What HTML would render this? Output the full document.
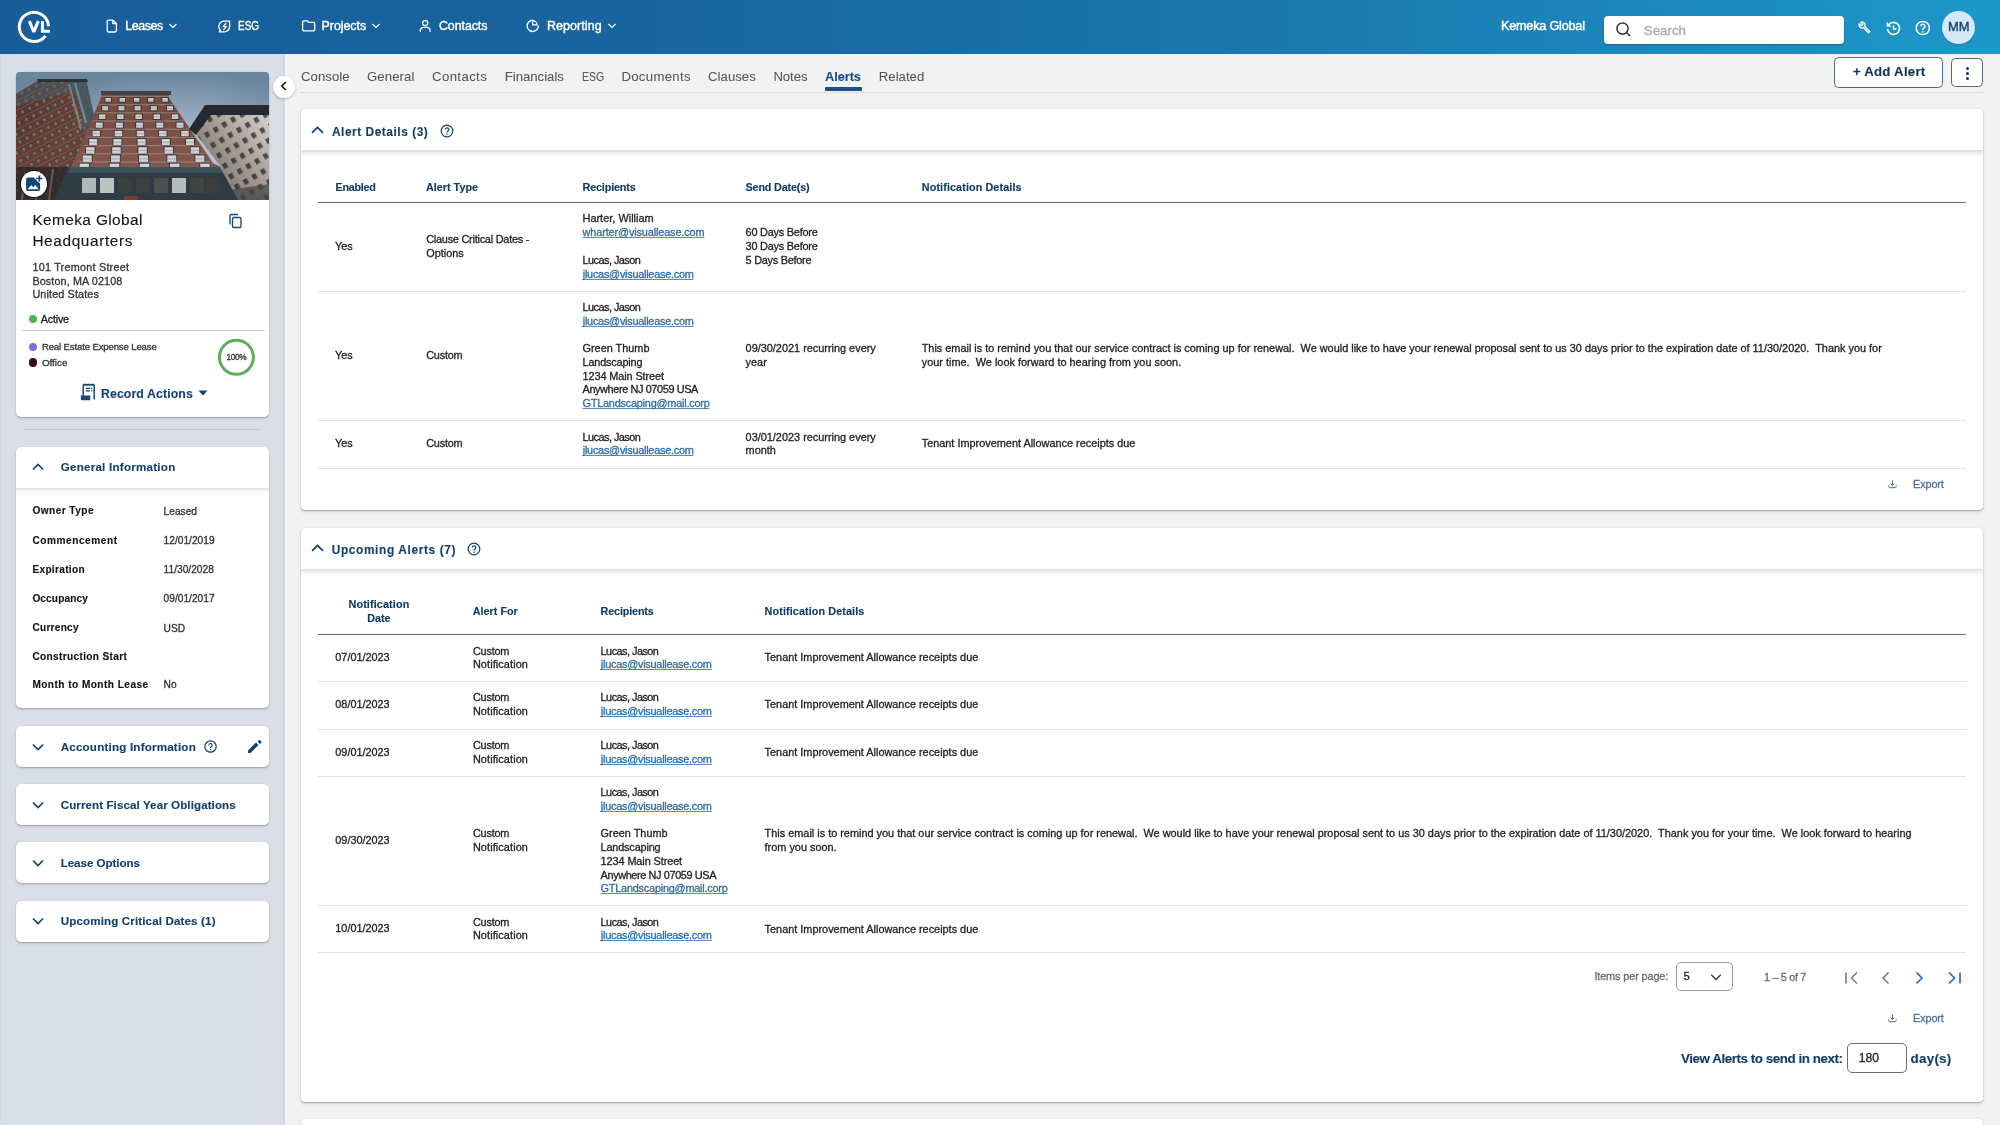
<!DOCTYPE html>
<html><head><meta charset="utf-8"><title>Alerts</title>
<style>
html,body{margin:0;padding:0;}
body{width:2000px;height:1125px;overflow:hidden;position:relative;background:#f2f2f2;font-family:"Liberation Sans",sans-serif;}
.a{position:absolute;}
.t{position:absolute;white-space:pre;-webkit-text-stroke:0.3px currentColor;}
.u{text-decoration:underline;text-underline-offset:1.2px;text-decoration-thickness:1px;text-decoration-skip-ink:none;text-decoration-color:#5d8cbc;}
</style></head><body><div id="root" style="position:absolute;left:0;top:0;width:2000px;height:1125px;overflow:hidden;will-change:transform;">
<div class="a" style="left:0px;top:0px;width:2000px;height:54px;background:linear-gradient(90deg,#185d9a 0%,#1764a0 30%,#1a6fa8 50%,#1b7db4 70%,#1d97c9 100%);"></div>
<svg class="a" style="left:14px;top:7px;" width="40" height="40" viewBox="0 0 40 40"><path d="M34.5 19.2 A14.6 14.6 0 1 0 31.5 28.8" fill="none" stroke="#fff" stroke-width="3"/>
<path d="M15.3 14.2L19.8 25 24.3 14.2" fill="none" stroke="#fff" stroke-width="3.1" stroke-linejoin="bevel"/>
<path d="M28.4 14V24.2H36" fill="none" stroke="#fff" stroke-width="3"/></svg>
<svg class="a" style="left:105px;top:19px;" width="14" height="14" viewBox="0 0 14 14"><path d="M2.2 2.6a1.5 1.5 0 0 1 1.5-1.5h4.3l3.4 3.4v7a1.5 1.5 0 0 1-1.5 1.5H3.7a1.5 1.5 0 0 1-1.5-1.5z M7.8 1.2v3.4h3.4" fill="none" stroke="#fff" stroke-width="1.3" stroke-linejoin="round"/></svg>
<div class="t " style="left:125.30px;top:18.96px;font-size:12.4px;line-height:14.88px;color:#ffffff;-webkit-text-stroke:0.38px #ffffff;letter-spacing:-0.398px;">Leases</div>
<svg class="a" style="left:168px;top:22px;" width="10" height="8" viewBox="0 0 10 8"><path d="M1.5 2l3.5 3.5 3.5-3.5" fill="none" stroke="#fff" stroke-width="1.2"/></svg>
<svg class="a" style="left:217px;top:19px;" width="15" height="15" viewBox="0 0 15 15"><path d="M7.2 2.1H12.6V7.6A5.2 5.2 0 0 1 7.4 12.8H2.3L3.6 11.3A5.3 5.3 0 0 1 7.2 2.1Z" fill="none" stroke="#fff" stroke-width="1.35" stroke-linejoin="round"/><path d="M8.9 4.5L6 7.7H9.4L6.6 10.7" fill="none" stroke="#fff" stroke-width="1.2" stroke-linejoin="round" stroke-linecap="round"/></svg>
<div class="t " style="left:238.40px;top:18.96px;font-size:12.4px;line-height:14.88px;color:#ffffff;-webkit-text-stroke:0.38px #ffffff;transform:scaleX(0.8026);transform-origin:0.00px 0;">ESG</div>
<svg class="a" style="left:300px;top:18px;" width="16" height="15" viewBox="0 0 16 15"><path d="M2.6 4.1a1.3 1.3 0 0 1 1.3-1.3h3.2l1.5 1.5h4.8a1.3 1.3 0 0 1 1.3 1.3v5.9a1.3 1.3 0 0 1-1.3 1.3H3.9a1.3 1.3 0 0 1-1.3-1.3z" fill="none" stroke="#fff" stroke-width="1.3" stroke-linejoin="round"/></svg>
<div class="t " style="left:321.60px;top:18.96px;font-size:12.4px;line-height:14.88px;color:#ffffff;-webkit-text-stroke:0.38px #ffffff;letter-spacing:-0.038px;">Projects</div>
<svg class="a" style="left:371px;top:22px;" width="10" height="8" viewBox="0 0 10 8"><path d="M1.5 2l3.5 3.5 3.5-3.5" fill="none" stroke="#fff" stroke-width="1.2"/></svg>
<svg class="a" style="left:418px;top:19px;" width="14" height="14" viewBox="0 0 14 14"><circle cx="7.2" cy="4.1" r="2.6" fill="none" stroke="#fff" stroke-width="1.3"/><path d="M2.3 12.3v-.7a3.6 3.2 0 0 1 3.6-3.2h2.6a3.6 3.2 0 0 1 3.6 3.2v.7" fill="none" stroke="#fff" stroke-width="1.3" stroke-linecap="round"/></svg>
<div class="t " style="left:439.00px;top:18.96px;font-size:12.4px;line-height:14.88px;color:#ffffff;-webkit-text-stroke:0.38px #ffffff;letter-spacing:-0.074px;">Contacts</div>
<svg class="a" style="left:525px;top:18px;" width="15" height="15" viewBox="0 0 15 15"><path d="M7.7 2.3A5.6 5.6 0 1 0 13.3 7.9" fill="none" stroke="#fff" stroke-width="1.4" stroke-linecap="round"/><path d="M7.7 2.6v4.3h4.3a4.3 4.3 0 0 0-4.3-4.3z" fill="none" stroke="#fff" stroke-width="1.2" stroke-linejoin="round"/></svg>
<div class="t " style="left:547.00px;top:18.96px;font-size:12.4px;line-height:14.88px;color:#ffffff;-webkit-text-stroke:0.38px #ffffff;letter-spacing:0.106px;">Reporting</div>
<svg class="a" style="left:607px;top:22px;" width="10" height="8" viewBox="0 0 10 8"><path d="M1.5 2l3.5 3.5 3.5-3.5" fill="none" stroke="#fff" stroke-width="1.2"/></svg>
<div class="t " style="left:1501.00px;top:19.17px;font-size:12.6px;line-height:15.12px;color:#ffffff;-webkit-text-stroke:0.4px #ffffff;letter-spacing:-0.177px;">Kemeka Global</div>
<div class="a" style="left:1604px;top:16px;width:240px;height:28px;background:#fff;border-radius:4px;box-shadow:0 1px 2px rgba(0,0,0,.25);"></div>
<svg class="a" style="left:1615px;top:21px;" width="18" height="17" viewBox="0 0 18 17"><circle cx="7.5" cy="7.5" r="5.6" fill="none" stroke="#333" stroke-width="1.5"/><path d="M11.5 11.5l3.5 3.5" stroke="#333" stroke-width="1.6"/></svg>
<div class="t " style="left:1643.75px;top:23.01px;font-size:13.3px;line-height:15.96px;color:#a9a9a9;letter-spacing:0.018px;">Search</div>
<svg class="a" style="left:1858.3px;top:21.3px;" width="13" height="13" viewBox="0 0 13 13"><g transform="scale(0.54)"><path d="M22.61 18.99l-9.08-9.08c.93-2.34.45-5.1-1.44-7C9.79.61 6.210.4 3.66 2.26L7.5 6.11 6.08 7.52 2.25 3.690C.39 6.23.6 9.82 2.9 12.11c1.86 1.86 4.57 2.35 6.89 1.48l9.11 9.11c.39.39 1.02.39 1.41 0l2.3-2.3c.4-.38.4-1.01 0-1.41zm-3 1.6l-9.46-9.46c-.61.45-1.290.72-2 .82-1.36.2-2.79-.21-3.83-1.25C3.37 9.76 2.930 8.5 3 7.26l3.090 3.09 4.24-4.24-3.09-3.09c1.24-.07 2.49.37 3.44 1.31 1.080 1.08 1.49 2.57 1.24 3.96-.12.71-.42 1.37-.88 1.96l9.45 9.45-.88.89z" fill="#fff" stroke="#fff" stroke-width=".6"/></g></svg>
<svg class="a" style="left:1886px;top:21px;" width="15" height="15" viewBox="0 0 15 15"><path d="M2.2 4.5A6 6 0 1 1 1.5 8" fill="none" stroke="#fff" stroke-width="1.6"/><path d="M1.3 1.5v3.5h3.5" fill="none" stroke="#fff" stroke-width="1.5"/><path d="M7.5 4.5v3.5h3" fill="none" stroke="#fff" stroke-width="1.5"/></svg>
<svg class="a" style="left:1915px;top:20px;" width="16" height="16" viewBox="0 0 16 16"><circle cx="7.8" cy="8" r="6.6" fill="none" stroke="#fff" stroke-width="1.5"/><path d="M5.7 6.3a2.1 2.1 0 1 1 2.9 1.9c-.6.3-.8.7-.8 1.3v.4" fill="none" stroke="#fff" stroke-width="1.4"/><circle cx="7.8" cy="11.8" r=".9" fill="#fff"/></svg>
<div class="a" style="left:1942px;top:10.5px;width:33px;height:33px;background:#d3e8f9;border-radius:50%;box-shadow:0 1px 2px rgba(0,0,0,.15);"></div>
<div class="t " style="left:1947.50px;top:18.88px;font-size:12.8px;line-height:15.36px;color:#17406c;-webkit-text-stroke:0.38px #17406c;transform:scaleX(1.0088);transform-origin:0.00px 0;">MM</div>
<div class="a" style="left:0px;top:54px;width:283px;height:1071px;background:#dadee7;"></div>
<div class="a" style="left:283px;top:54px;width:2px;height:1071px;background:#d4d8e2;"></div>
<div class="a" style="left:0px;top:54px;width:1.2px;height:1071px;background:#cfd4de;"></div>
<div class="a" style="left:285px;top:54px;width:1px;height:1071px;background:#f4f4f7;"></div>
<div class="a" style="left:16px;top:72px;width:253px;height:345px;background:#fff;border-radius:5px;box-shadow:0 0 1px rgba(20,30,60,.2),0 1px 1px rgba(20,30,60,.18),0 2px 3px rgba(20,30,60,.1);"></div>
<svg class="a" style="left:16px;top:72px;filter:saturate(.72);" width="253" height="128" viewBox="0 0 253 128"><defs>
<radialGradient id="sky" cx="0.62" cy="0.75" r="0.75"><stop offset="0" stop-color="#c0d6ea"/><stop offset="0.5" stop-color="#92b0cc"/><stop offset="1" stop-color="#6286a8"/></radialGradient>
<linearGradient id="lb" x1="0" y1="0" x2="1" y2="1"><stop offset="0" stop-color="#5a2e28"/><stop offset="0.6" stop-color="#76402f"/><stop offset="1" stop-color="#4a2a26"/></linearGradient>
<linearGradient id="cb" x1="0" y1="0" x2="0" y2="1"><stop offset="0" stop-color="#7e4638"/><stop offset="1" stop-color="#915446"/></linearGradient>
<linearGradient id="rb" x1="0" y1="1" x2="1" y2="0"><stop offset="0" stop-color="#6e645a"/><stop offset="0.55" stop-color="#a69a8e"/><stop offset="1" stop-color="#d6d0ca"/></linearGradient>
<pattern id="lw" width="8" height="8.5" patternUnits="userSpaceOnUse" patternTransform="rotate(-27)"><rect width="8" height="8.5" fill="none"/><rect x="1.8" y="2.2" width="4" height="4.6" fill="#2e2222" opacity=".55"/><rect x="2.4" y="2.8" width="2.8" height="3.4" fill="#8fa5a5" opacity=".6"/><rect x="0" y="0" width="8" height="1" fill="#9a6050" opacity=".6"/></pattern>
<pattern id="rw" width="10" height="12" patternUnits="userSpaceOnUse" patternTransform="rotate(-30)"><rect x="2" y="3" width="4.5" height="5.5" fill="#26282a" opacity=".75"/></pattern>
<clipPath id="pc"><path d="M0 128V4a4 4 0 0 1 4-4h245a4 4 0 0 1 4 4v124z"/></clipPath></defs>
<g clip-path="url(#pc)">
<rect width="253" height="128" fill="url(#sky)"/>
<path d="M0 22 L23 8 L70 8 L79 48 L64 95 L50 128 L0 128z" fill="url(#lb)"/>
<path d="M0 22 L23 8 L70 8 L79 48 L64 95 L50 128 L0 128z" fill="url(#lw)"/>
<path d="M50 8 L70 8 L79 48 L71 64 L60 24z" fill="#3e5a66" opacity=".9"/><path d="M23 8 L52 8 L56 20 L0 34 L0 22z" fill="#45606a" opacity=".55"/>
<path d="M52 12 L54 12 L66 56 L64 58z M58 11 L60 11 L71 50 L69 52z" fill="#8fa6b0" opacity=".6"/>
<path d="M21 7 L71 7 L72 10 L22 10z" fill="#2a3438"/>
<path d="M87 21 L153 21 L153 26 L197 91 L205 95 L55 95 L62 80z" fill="url(#cb)"/>
<path d="M85 19 L155 19 L155 23 L85 23z" fill="#3e4444"/>
<rect x="86.2" y="23.8" width="68.9" height="1.3" fill="#b59888" opacity=".55"/><rect x="88.5" y="25.1" width="7.3" height="5.5" fill="#2e2624" opacity=".75"/><rect x="89.4" y="26.0" width="5.5" height="3.7" fill="#c9d5dd"/><rect x="89.4" y="27.7" width="5.5" height="0.8" fill="#6f7e86" opacity=".6"/><rect x="102.7" y="25.1" width="7.3" height="5.5" fill="#2e2624" opacity=".75"/><rect x="103.6" y="26.0" width="5.5" height="3.7" fill="#c9d5dd"/><rect x="103.6" y="27.7" width="5.5" height="0.8" fill="#6f7e86" opacity=".6"/><rect x="117.0" y="25.1" width="7.3" height="5.5" fill="#2e2624" opacity=".75"/><rect x="117.9" y="26.0" width="5.5" height="3.7" fill="#c9d5dd"/><rect x="117.9" y="27.7" width="5.5" height="0.8" fill="#6f7e86" opacity=".6"/><rect x="131.2" y="25.1" width="7.3" height="5.5" fill="#2e2624" opacity=".75"/><rect x="132.1" y="26.0" width="5.5" height="3.7" fill="#c9d5dd"/><rect x="132.1" y="27.7" width="5.5" height="0.8" fill="#6f7e86" opacity=".6"/><rect x="145.4" y="25.1" width="7.3" height="5.5" fill="#2e2624" opacity=".75"/><rect x="146.3" y="26.0" width="5.5" height="3.7" fill="#c9d5dd"/><rect x="146.3" y="27.7" width="5.5" height="0.8" fill="#6f7e86" opacity=".6"/><rect x="83.2" y="32.0" width="76.8" height="1.3" fill="#b59888" opacity=".55"/><rect x="85.3" y="33.3" width="7.8" height="5.9" fill="#2e2624" opacity=".75"/><rect x="86.2" y="34.2" width="6.0" height="4.1" fill="#c9d5dd"/><rect x="86.2" y="36.1" width="6.0" height="0.8" fill="#6f7e86" opacity=".6"/><rect x="101.5" y="33.3" width="7.8" height="5.9" fill="#2e2624" opacity=".75"/><rect x="102.4" y="34.2" width="6.0" height="4.1" fill="#c9d5dd"/><rect x="102.4" y="36.1" width="6.0" height="0.8" fill="#6f7e86" opacity=".6"/><rect x="117.7" y="33.3" width="7.8" height="5.9" fill="#2e2624" opacity=".75"/><rect x="118.6" y="34.2" width="6.0" height="4.1" fill="#c9d5dd"/><rect x="118.6" y="36.1" width="6.0" height="0.8" fill="#6f7e86" opacity=".6"/><rect x="133.9" y="33.3" width="7.8" height="5.9" fill="#2e2624" opacity=".75"/><rect x="134.8" y="34.2" width="6.0" height="4.1" fill="#c9d5dd"/><rect x="134.8" y="36.1" width="6.0" height="0.8" fill="#6f7e86" opacity=".6"/><rect x="150.1" y="33.3" width="7.8" height="5.9" fill="#2e2624" opacity=".75"/><rect x="151.0" y="34.2" width="6.0" height="4.1" fill="#c9d5dd"/><rect x="151.0" y="36.1" width="6.0" height="0.8" fill="#6f7e86" opacity=".6"/><rect x="80.2" y="40.2" width="84.8" height="1.3" fill="#b59888" opacity=".55"/><rect x="82.0" y="41.5" width="8.3" height="6.4" fill="#2e2624" opacity=".75"/><rect x="82.9" y="42.4" width="6.5" height="4.6" fill="#c9d5dd"/><rect x="82.9" y="44.5" width="6.5" height="0.8" fill="#6f7e86" opacity=".6"/><rect x="100.2" y="41.5" width="8.3" height="6.4" fill="#2e2624" opacity=".75"/><rect x="101.1" y="42.4" width="6.5" height="4.6" fill="#c9d5dd"/><rect x="101.1" y="44.5" width="6.5" height="0.8" fill="#6f7e86" opacity=".6"/><rect x="118.5" y="41.5" width="8.3" height="6.4" fill="#2e2624" opacity=".75"/><rect x="119.4" y="42.4" width="6.5" height="4.6" fill="#c9d5dd"/><rect x="119.4" y="44.5" width="6.5" height="0.8" fill="#6f7e86" opacity=".6"/><rect x="136.7" y="41.5" width="8.3" height="6.4" fill="#2e2624" opacity=".75"/><rect x="137.6" y="42.4" width="6.5" height="4.6" fill="#c9d5dd"/><rect x="137.6" y="44.5" width="6.5" height="0.8" fill="#6f7e86" opacity=".6"/><rect x="154.9" y="41.5" width="8.3" height="6.4" fill="#2e2624" opacity=".75"/><rect x="155.8" y="42.4" width="6.5" height="4.6" fill="#c9d5dd"/><rect x="155.8" y="44.5" width="6.5" height="0.8" fill="#6f7e86" opacity=".6"/><rect x="77.2" y="48.4" width="92.8" height="1.3" fill="#b59888" opacity=".55"/><rect x="78.8" y="49.7" width="8.8" height="6.9" fill="#2e2624" opacity=".75"/><rect x="79.7" y="50.6" width="7.0" height="5.1" fill="#c9d5dd"/><rect x="79.7" y="52.9" width="7.0" height="0.8" fill="#6f7e86" opacity=".6"/><rect x="99.0" y="49.7" width="8.8" height="6.9" fill="#2e2624" opacity=".75"/><rect x="99.9" y="50.6" width="7.0" height="5.1" fill="#c9d5dd"/><rect x="99.9" y="52.9" width="7.0" height="0.8" fill="#6f7e86" opacity=".6"/><rect x="119.2" y="49.7" width="8.8" height="6.9" fill="#2e2624" opacity=".75"/><rect x="120.1" y="50.6" width="7.0" height="5.1" fill="#c9d5dd"/><rect x="120.1" y="52.9" width="7.0" height="0.8" fill="#6f7e86" opacity=".6"/><rect x="139.4" y="49.7" width="8.8" height="6.9" fill="#2e2624" opacity=".75"/><rect x="140.3" y="50.6" width="7.0" height="5.1" fill="#c9d5dd"/><rect x="140.3" y="52.9" width="7.0" height="0.8" fill="#6f7e86" opacity=".6"/><rect x="159.6" y="49.7" width="8.8" height="6.9" fill="#2e2624" opacity=".75"/><rect x="160.5" y="50.6" width="7.0" height="5.1" fill="#c9d5dd"/><rect x="160.5" y="52.9" width="7.0" height="0.8" fill="#6f7e86" opacity=".6"/><rect x="74.2" y="56.6" width="100.8" height="1.3" fill="#b59888" opacity=".55"/><rect x="75.6" y="57.9" width="9.3" height="7.3" fill="#2e2624" opacity=".75"/><rect x="76.5" y="58.8" width="7.5" height="5.5" fill="#c9d5dd"/><rect x="76.5" y="61.3" width="7.5" height="0.8" fill="#6f7e86" opacity=".6"/><rect x="97.8" y="57.9" width="9.3" height="7.3" fill="#2e2624" opacity=".75"/><rect x="98.7" y="58.8" width="7.5" height="5.5" fill="#c9d5dd"/><rect x="98.7" y="61.3" width="7.5" height="0.8" fill="#6f7e86" opacity=".6"/><rect x="119.9" y="57.9" width="9.3" height="7.3" fill="#2e2624" opacity=".75"/><rect x="120.8" y="58.8" width="7.5" height="5.5" fill="#c9d5dd"/><rect x="120.8" y="61.3" width="7.5" height="0.8" fill="#6f7e86" opacity=".6"/><rect x="142.1" y="57.9" width="9.3" height="7.3" fill="#2e2624" opacity=".75"/><rect x="143.0" y="58.8" width="7.5" height="5.5" fill="#c9d5dd"/><rect x="143.0" y="61.3" width="7.5" height="0.8" fill="#6f7e86" opacity=".6"/><rect x="164.3" y="57.9" width="9.3" height="7.3" fill="#2e2624" opacity=".75"/><rect x="165.2" y="58.8" width="7.5" height="5.5" fill="#c9d5dd"/><rect x="165.2" y="61.3" width="7.5" height="0.8" fill="#6f7e86" opacity=".6"/><rect x="71.2" y="64.8" width="108.8" height="1.3" fill="#b59888" opacity=".55"/><rect x="72.3" y="66.1" width="9.8" height="7.8" fill="#2e2624" opacity=".75"/><rect x="73.2" y="67.0" width="8.0" height="6.0" fill="#c9d5dd"/><rect x="73.2" y="69.7" width="8.0" height="0.8" fill="#6f7e86" opacity=".6"/><rect x="96.5" y="66.1" width="9.8" height="7.8" fill="#2e2624" opacity=".75"/><rect x="97.4" y="67.0" width="8.0" height="6.0" fill="#c9d5dd"/><rect x="97.4" y="69.7" width="8.0" height="0.8" fill="#6f7e86" opacity=".6"/><rect x="120.7" y="66.1" width="9.8" height="7.8" fill="#2e2624" opacity=".75"/><rect x="121.6" y="67.0" width="8.0" height="6.0" fill="#c9d5dd"/><rect x="121.6" y="69.7" width="8.0" height="0.8" fill="#6f7e86" opacity=".6"/><rect x="144.9" y="66.1" width="9.8" height="7.8" fill="#2e2624" opacity=".75"/><rect x="145.8" y="67.0" width="8.0" height="6.0" fill="#c9d5dd"/><rect x="145.8" y="69.7" width="8.0" height="0.8" fill="#6f7e86" opacity=".6"/><rect x="169.1" y="66.1" width="9.8" height="7.8" fill="#2e2624" opacity=".75"/><rect x="170.0" y="67.0" width="8.0" height="6.0" fill="#c9d5dd"/><rect x="170.0" y="69.7" width="8.0" height="0.8" fill="#6f7e86" opacity=".6"/><rect x="68.2" y="73.0" width="116.7" height="1.3" fill="#b59888" opacity=".55"/><rect x="69.1" y="74.3" width="10.3" height="8.3" fill="#2e2624" opacity=".75"/><rect x="70.0" y="75.2" width="8.5" height="6.5" fill="#c9d5dd"/><rect x="70.0" y="78.1" width="8.5" height="0.8" fill="#6f7e86" opacity=".6"/><rect x="95.3" y="74.3" width="10.3" height="8.3" fill="#2e2624" opacity=".75"/><rect x="96.2" y="75.2" width="8.5" height="6.5" fill="#c9d5dd"/><rect x="96.2" y="78.1" width="8.5" height="0.8" fill="#6f7e86" opacity=".6"/><rect x="121.4" y="74.3" width="10.3" height="8.3" fill="#2e2624" opacity=".75"/><rect x="122.3" y="75.2" width="8.5" height="6.5" fill="#c9d5dd"/><rect x="122.3" y="78.1" width="8.5" height="0.8" fill="#6f7e86" opacity=".6"/><rect x="147.6" y="74.3" width="10.3" height="8.3" fill="#2e2624" opacity=".75"/><rect x="148.5" y="75.2" width="8.5" height="6.5" fill="#c9d5dd"/><rect x="148.5" y="78.1" width="8.5" height="0.8" fill="#6f7e86" opacity=".6"/><rect x="173.8" y="74.3" width="10.3" height="8.3" fill="#2e2624" opacity=".75"/><rect x="174.7" y="75.2" width="8.5" height="6.5" fill="#c9d5dd"/><rect x="174.7" y="78.1" width="8.5" height="0.8" fill="#6f7e86" opacity=".6"/><rect x="65.2" y="81.2" width="124.7" height="1.3" fill="#b59888" opacity=".55"/><rect x="65.8" y="82.5" width="10.8" height="8.7" fill="#2e2624" opacity=".75"/><rect x="66.7" y="83.4" width="9.0" height="6.9" fill="#c9d5dd"/><rect x="66.7" y="86.5" width="9.0" height="0.8" fill="#6f7e86" opacity=".6"/><rect x="94.0" y="82.5" width="10.8" height="8.7" fill="#2e2624" opacity=".75"/><rect x="94.9" y="83.4" width="9.0" height="6.9" fill="#c9d5dd"/><rect x="94.9" y="86.5" width="9.0" height="0.8" fill="#6f7e86" opacity=".6"/><rect x="122.2" y="82.5" width="10.8" height="8.7" fill="#2e2624" opacity=".75"/><rect x="123.1" y="83.4" width="9.0" height="6.9" fill="#c9d5dd"/><rect x="123.1" y="86.5" width="9.0" height="0.8" fill="#6f7e86" opacity=".6"/><rect x="150.4" y="82.5" width="10.8" height="8.7" fill="#2e2624" opacity=".75"/><rect x="151.3" y="83.4" width="9.0" height="6.9" fill="#c9d5dd"/><rect x="151.3" y="86.5" width="9.0" height="0.8" fill="#6f7e86" opacity=".6"/><rect x="178.5" y="82.5" width="10.8" height="8.7" fill="#2e2624" opacity=".75"/><rect x="179.4" y="83.4" width="9.0" height="6.9" fill="#c9d5dd"/><rect x="179.4" y="86.5" width="9.0" height="0.8" fill="#6f7e86" opacity=".6"/><rect x="62.2" y="89.4" width="132.7" height="1.3" fill="#b59888" opacity=".55"/><rect x="62.6" y="90.7" width="11.3" height="9.2" fill="#2e2624" opacity=".75"/><rect x="63.5" y="91.6" width="9.5" height="7.4" fill="#c9d5dd"/><rect x="63.5" y="94.9" width="9.5" height="0.8" fill="#6f7e86" opacity=".6"/><rect x="92.8" y="90.7" width="11.3" height="9.2" fill="#2e2624" opacity=".75"/><rect x="93.7" y="91.6" width="9.5" height="7.4" fill="#c9d5dd"/><rect x="93.7" y="94.9" width="9.5" height="0.8" fill="#6f7e86" opacity=".6"/><rect x="122.9" y="90.7" width="11.3" height="9.2" fill="#2e2624" opacity=".75"/><rect x="123.8" y="91.6" width="9.5" height="7.4" fill="#c9d5dd"/><rect x="123.8" y="94.9" width="9.5" height="0.8" fill="#6f7e86" opacity=".6"/><rect x="153.1" y="90.7" width="11.3" height="9.2" fill="#2e2624" opacity=".75"/><rect x="154.0" y="91.6" width="9.5" height="7.4" fill="#c9d5dd"/><rect x="154.0" y="94.9" width="9.5" height="0.8" fill="#6f7e86" opacity=".6"/><rect x="183.3" y="90.7" width="11.3" height="9.2" fill="#2e2624" opacity=".75"/><rect x="184.2" y="91.6" width="9.5" height="7.4" fill="#c9d5dd"/><rect x="184.2" y="94.9" width="9.5" height="0.8" fill="#6f7e86" opacity=".6"/>
<path d="M180 62 L195 42 L253 42 L253 128 L216 128 L205 95z" fill="url(#rb)"/>
<path d="M180 62 L195 42 L253 42 L253 128 L216 128 L205 95z" fill="url(#rw)"/>
<path d="M173 57 L189 33 L253 33 L253 43 L195 43 L180 63z" fill="#252a33"/>
<path d="M212 118 L253 112 L253 128 L216 128z" fill="#4a4440" opacity=".7"/>
<path d="M0 95 L64 95 L50 128 L0 128z" fill="#2e2624" opacity=".8"/><path d="M8 100l-3 28h2l3-28z M22 98l-3 30h2l3-30z M36 97l-4 31h2l4-31z" fill="#8a8a86" opacity=".5"/>
<path d="M52 95 L204 95 L222 128 L38 128z" fill="#2b3d47"/>
<path d="M54 95 L204 95 L207 101 L52 101z" fill="#36525c"/>
<rect x="66" y="106" width="14" height="15" fill="#aab9b9"/><rect x="84" y="106" width="14" height="15" fill="#b8c4c4"/><rect x="102" y="106" width="14" height="15" fill="#39403c"/><rect x="120" y="106" width="14" height="15" fill="#3a4240"/><rect x="138" y="106" width="14" height="15" fill="#4a524e"/><rect x="156" y="106" width="14" height="15" fill="#b2bdbd"/><rect x="174" y="106" width="14" height="15" fill="#3e4644"/><rect x="190" y="106" width="14" height="15" fill="#38403e"/><rect x="108" y="124" width="14" height="4" fill="#a8302a" opacity=".85"/></g></svg>
<div class="a" style="left:21px;top:170.8px;width:26px;height:26.6px;background:#fff;border-radius:50%;box-shadow:0 0 1.5px 1px rgba(0,0,0,.55);"></div>
<svg class="a" style="left:24px;top:175px;" width="20" height="20" viewBox="0 0 20 20"><rect x="2.1" y="2.6" width="14" height="13.4" rx="1.8" fill="#0f4577"/><path d="M9.8 1.5L17.5 1.5 17.5 9.2z" fill="#fff"/><path d="M10.5 2.2L16.8 8.5" stroke="#fff" stroke-width="1.5"/><path d="M3.6 14.2L7.2 10.1 9.2 12.3 11.3 10.1 14.8 14.2z" fill="#fff"/><path d="M15.3 0.2v6.6 M12 3.5h6.6" stroke="#fff" stroke-width="3.2"/><path d="M15.3 0.4v6.2 M12.2 3.5h6.2" stroke="#0f4577" stroke-width="1.7"/></svg>
<div class="t " style="left:32.40px;top:210.62px;font-size:15.4px;line-height:18.48px;color:#111;-webkit-text-stroke:0.1px #111;letter-spacing:0.395px;">Kemeka Global</div>
<div class="t " style="left:32.40px;top:231.92px;font-size:15.4px;line-height:18.48px;color:#111;-webkit-text-stroke:0.1px #111;letter-spacing:0.616px;">Headquarters</div>
<svg class="a" style="left:228px;top:213px;" width="15" height="16" viewBox="0 0 15 16"><rect x="4.5" y="4.5" width="8.5" height="10" rx="1.5" fill="none" stroke="#1d4672" stroke-width="1.35"/><path d="M2 11.5V3a1.5 1.5 0 0 1 1.5-1.5H10" fill="none" stroke="#1d4672" stroke-width="1.35"/></svg>
<div class="t " style="left:32.40px;top:260.88px;font-size:10.8px;line-height:12.96px;color:#333;letter-spacing:0.244px;">101 Tremont Street</div>
<div class="t " style="left:32.40px;top:274.98px;font-size:10.8px;line-height:12.96px;color:#333;letter-spacing:0.114px;">Boston, MA 02108</div>
<div class="t " style="left:32.40px;top:288.48px;font-size:10.8px;line-height:12.96px;color:#333;letter-spacing:0.137px;">United States</div>
<div class="a" style="left:29px;top:315px;width:8px;height:8px;background:#4cb450;border-radius:50%;"></div>
<div class="t " style="left:40.80px;top:312.58px;font-size:10.8px;line-height:12.96px;color:#222;letter-spacing:-0.226px;">Active</div>
<div class="a" style="left:22px;top:329.5px;width:243px;height:1.2px;background:#c9c9c9;"></div>
<div class="a" style="left:29px;top:342.5px;width:8.3px;height:8.3px;background:#7b6fe0;border-radius:50%;"></div>
<div class="t " style="left:41.90px;top:341.02px;font-size:9.59px;line-height:11.51px;color:#333;letter-spacing:-0.139px;">Real Estate Expense Lease</div>
<div class="a" style="left:29px;top:358.3px;width:8.3px;height:8.3px;background:#3d0a0c;border-radius:50%;"></div>
<div class="t " style="left:41.90px;top:356.92px;font-size:9.8px;line-height:11.76px;color:#333;letter-spacing:0.014px;">Office</div>
<svg class="a" style="left:217px;top:338px;" width="39" height="39" viewBox="0 0 39 39"><circle cx="19.4" cy="19.3" r="17" fill="none" stroke="#5fae5f" stroke-width="3"/></svg>
<div class="t " style="left:226.40px;top:353.34px;font-size:8.3px;line-height:9.96px;color:#333;letter-spacing:-0.316px;">100%</div>
<svg class="a" style="left:79px;top:383px;" width="19" height="19" viewBox="0 0 19 19"><path d="M4.2 16V2.2l1.1-.9 1.1.9 1.1-.9 1.1.9 1.1-.9 1.1.9 1.1-.9 1.1.9 1.1-.9 1.1.9V16.6" fill="#fff" stroke="#17457a" stroke-width="1.5" stroke-linejoin="round"/><path d="M6.8 5.3h4.2 M6.8 7.9h4.2" stroke="#17457a" stroke-width="1.2"/><path d="M12.2 5.3h1.2 M12.2 7.9h1.2" stroke="#17457a" stroke-width="1.2"/><path d="M1.8 12.6h9.4v4.7H3.4a1.6 1.6 0 0 1-1.6-1.6z" fill="#17457a"/></svg>
<div class="t " style="left:101.00px;top:387.36px;font-size:12.3px;line-height:14.76px;color:#174275;font-weight:700;-webkit-text-stroke:0.12px #174275;letter-spacing:0.103px;">Record Actions</div>
<svg class="a" style="left:198px;top:390px;" width="10" height="6" viewBox="0 0 10 6"><path d="M0.5 0.5h9l-4.5 5z" fill="#174275"/></svg>
<div class="a" style="left:24px;top:429px;width:237px;height:1px;background:#c6cad3;"></div>
<div class="a" style="left:16px;top:447px;width:253px;height:261px;background:#fff;border-radius:5px;box-shadow:0 0 1px rgba(20,30,60,.2),0 1px 1px rgba(20,30,60,.18),0 2px 3px rgba(20,30,60,.1);"></div>
<div class="a" style="left:16px;top:488px;width:253px;height:6px;background:linear-gradient(180deg,rgba(0,0,0,.12),rgba(0,0,0,.05) 40%,rgba(0,0,0,0));"></div>
<svg class="a" style="left:32px;top:463px;" width="12" height="8" viewBox="0 0 12 8"><path d="M1 6.5L6 1.5l5 5" fill="none" stroke="#123d6a" stroke-width="1.6"/></svg>
<div class="t " style="left:60.70px;top:460.12px;font-size:11.6px;line-height:13.92px;color:#143f6c;font-weight:700;-webkit-text-stroke:0.12px #143f6c;letter-spacing:0.244px;">General Information</div>
<div class="t " style="left:32.40px;top:505.34px;font-size:10.1px;line-height:12.12px;color:#111;font-weight:700;-webkit-text-stroke:0.12px #111;letter-spacing:0.459px;">Owner Type</div>
<div class="t " style="left:163.60px;top:505.75px;font-size:10.2px;line-height:12.24px;color:#333;">Leased</div>
<div class="t " style="left:32.40px;top:534.54px;font-size:10.1px;line-height:12.12px;color:#111;font-weight:700;-webkit-text-stroke:0.12px #111;letter-spacing:0.557px;">Commencement</div>
<div class="t " style="left:163.60px;top:534.95px;font-size:10.2px;line-height:12.24px;color:#333;">12/01/2019</div>
<div class="t " style="left:32.40px;top:563.74px;font-size:10.1px;line-height:12.12px;color:#111;font-weight:700;-webkit-text-stroke:0.12px #111;letter-spacing:0.323px;">Expiration</div>
<div class="t " style="left:163.60px;top:564.15px;font-size:10.2px;line-height:12.24px;color:#333;">11/30/2028</div>
<div class="t " style="left:32.40px;top:592.94px;font-size:10.1px;line-height:12.12px;color:#111;font-weight:700;-webkit-text-stroke:0.12px #111;letter-spacing:0.133px;">Occupancy</div>
<div class="t " style="left:163.60px;top:593.35px;font-size:10.2px;line-height:12.24px;color:#333;">09/01/2017</div>
<div class="t " style="left:32.40px;top:622.14px;font-size:10.1px;line-height:12.12px;color:#111;font-weight:700;-webkit-text-stroke:0.12px #111;letter-spacing:0.266px;">Currency</div>
<div class="t " style="left:163.60px;top:622.55px;font-size:10.2px;line-height:12.24px;color:#333;">USD</div>
<div class="t " style="left:32.40px;top:651.44px;font-size:10.1px;line-height:12.12px;color:#111;font-weight:700;-webkit-text-stroke:0.12px #111;letter-spacing:0.342px;">Construction Start</div>
<div class="t " style="left:32.40px;top:678.74px;font-size:10.1px;line-height:12.12px;color:#111;font-weight:700;-webkit-text-stroke:0.12px #111;letter-spacing:0.455px;">Month to Month Lease</div>
<div class="t " style="left:163.60px;top:679.15px;font-size:10.2px;line-height:12.24px;color:#333;">No</div>
<div class="a" style="left:16px;top:726px;width:253px;height:41px;background:#fff;border-radius:5px;box-shadow:0 0 1px rgba(20,30,60,.2),0 1px 1px rgba(20,30,60,.18),0 2px 3px rgba(20,30,60,.1);"></div>
<svg class="a" style="left:32px;top:742.6px;" width="12" height="8" viewBox="0 0 12 8"><path d="M1 1.5l5 5 5-5" fill="none" stroke="#123d6a" stroke-width="1.6"/></svg>
<div class="t " style="left:60.70px;top:739.62px;font-size:11.6px;line-height:13.92px;color:#143f6c;font-weight:700;-webkit-text-stroke:0.12px #143f6c;letter-spacing:0.205px;">Accounting Information</div>
<div class="a" style="left:16px;top:784px;width:253px;height:41px;background:#fff;border-radius:5px;box-shadow:0 0 1px rgba(20,30,60,.2),0 1px 1px rgba(20,30,60,.18),0 2px 3px rgba(20,30,60,.1);"></div>
<svg class="a" style="left:32px;top:800.9px;" width="12" height="8" viewBox="0 0 12 8"><path d="M1 1.5l5 5 5-5" fill="none" stroke="#123d6a" stroke-width="1.6"/></svg>
<div class="t " style="left:60.70px;top:797.92px;font-size:11.6px;line-height:13.92px;color:#143f6c;font-weight:700;-webkit-text-stroke:0.12px #143f6c;letter-spacing:0.085px;">Current Fiscal Year Obligations</div>
<div class="a" style="left:16px;top:842px;width:253px;height:41px;background:#fff;border-radius:5px;box-shadow:0 0 1px rgba(20,30,60,.2),0 1px 1px rgba(20,30,60,.18),0 2px 3px rgba(20,30,60,.1);"></div>
<svg class="a" style="left:32px;top:858.7px;" width="12" height="8" viewBox="0 0 12 8"><path d="M1 1.5l5 5 5-5" fill="none" stroke="#123d6a" stroke-width="1.6"/></svg>
<div class="t " style="left:60.70px;top:855.72px;font-size:11.6px;line-height:13.92px;color:#143f6c;font-weight:700;-webkit-text-stroke:0.12px #143f6c;letter-spacing:-0.052px;">Lease Options</div>
<div class="a" style="left:16px;top:901px;width:253px;height:41px;background:#fff;border-radius:5px;box-shadow:0 0 1px rgba(20,30,60,.2),0 1px 1px rgba(20,30,60,.18),0 2px 3px rgba(20,30,60,.1);"></div>
<svg class="a" style="left:32px;top:917.2px;" width="12" height="8" viewBox="0 0 12 8"><path d="M1 1.5l5 5 5-5" fill="none" stroke="#123d6a" stroke-width="1.6"/></svg>
<div class="t " style="left:60.70px;top:914.22px;font-size:11.6px;line-height:13.92px;color:#143f6c;font-weight:700;-webkit-text-stroke:0.12px #143f6c;letter-spacing:0.131px;">Upcoming Critical Dates (1)</div>
<svg class="a" style="left:203px;top:739px;" width="15" height="15" viewBox="0 0 15 15"><circle cx="7.5" cy="7.5" r="5.7" fill="none" stroke="#143f6c" stroke-width="1.2"/><path d="M5.8 6.2a1.7 1.7 0 1 1 2.3 1.6c-.5.2-.6.5-.6 1v.3" fill="none" stroke="#143f6c" stroke-width="1.1"/><circle cx="7.5" cy="10.6" r=".7" fill="#143f6c"/></svg>
<svg class="a" style="left:246px;top:738px;" width="17" height="17" viewBox="0 0 17 17"><path d="M2 12.5v2.5h2.5l8-8-2.5-2.5z M11.5 3.5l1.3-1.3a.9.9 0 0 1 1.2 0l1.3 1.3a.9.9 0 0 1 0 1.2l-1.3 1.3z" fill="#143f6c"/></svg>
<div class="a" style="left:272.5px;top:76px;width:22px;height:22px;background:#fff;border-radius:50%;box-shadow:0 1px 3px rgba(0,0,0,.25);"></div>
<svg class="a" style="left:278px;top:80.2px;" width="12" height="12" viewBox="0 0 12 12"><path d="M7.8 2L3.8 6l4 4" fill="none" stroke="#111" stroke-width="1.6"/></svg>
<div class="t " style="left:301.00px;top:68.51px;font-size:13.2px;line-height:15.84px;color:#555;-webkit-text-stroke:0.05px #555;letter-spacing:0.043px;">Console</div>
<div class="t " style="left:367.00px;top:68.51px;font-size:13.2px;line-height:15.84px;color:#555;-webkit-text-stroke:0.05px #555;letter-spacing:0.085px;">General</div>
<div class="t " style="left:432.00px;top:68.51px;font-size:13.2px;line-height:15.84px;color:#555;-webkit-text-stroke:0.05px #555;letter-spacing:0.389px;">Contacts</div>
<div class="t " style="left:504.70px;top:68.51px;font-size:13.2px;line-height:15.84px;color:#555;-webkit-text-stroke:0.05px #555;letter-spacing:-0.011px;">Financials</div>
<div class="t " style="left:581.70px;top:68.51px;font-size:13.2px;line-height:15.84px;color:#555;-webkit-text-stroke:0.05px #555;transform:scaleX(0.8007);transform-origin:0.00px 0;">ESG</div>
<div class="t " style="left:621.40px;top:68.51px;font-size:13.2px;line-height:15.84px;color:#555;-webkit-text-stroke:0.05px #555;letter-spacing:0.313px;">Documents</div>
<div class="t " style="left:708.00px;top:68.51px;font-size:13.2px;line-height:15.84px;color:#555;-webkit-text-stroke:0.05px #555;letter-spacing:0.030px;">Clauses</div>
<div class="t " style="left:773.40px;top:68.51px;font-size:13.2px;line-height:15.84px;color:#555;-webkit-text-stroke:0.05px #555;letter-spacing:-0.088px;">Notes</div>
<div class="t " style="left:878.80px;top:68.51px;font-size:13.2px;line-height:15.84px;color:#555;-webkit-text-stroke:0.05px #555;">Related</div>
<div class="t " style="left:825.00px;top:68.88px;font-size:12.8px;line-height:15.36px;color:#1a4e8c;font-weight:700;-webkit-text-stroke:0.12px #1a4e8c;letter-spacing:-0.058px;">Alerts</div>
<div class="a" style="left:300px;top:91.5px;width:1683px;height:1.2px;background:#dcdcdc;"></div>
<div class="a" style="left:825px;top:87px;width:37px;height:4.2px;background:#1a4e8c;border-radius:1px;"></div>
<div class="a" style="left:1833.5px;top:57.2px;width:109.5px;height:31px;box-sizing:border-box;background:#fff;border:1.8px solid #53667c;border-radius:4.5px;"></div>
<div class="t " style="left:1852.90px;top:64.01px;font-size:13.2px;line-height:15.84px;color:#0f2f55;font-weight:700;-webkit-text-stroke:0.12px #0f2f55;letter-spacing:0.257px;">+ Add Alert</div>
<div class="a" style="left:1951.4px;top:58.3px;width:31.6px;height:28.4px;box-sizing:border-box;background:#fff;border:1.8px solid #53667c;border-radius:4.5px;"></div>
<div class="a" style="left:1965.5px;top:66.5px;width:3px;height:3px;background:#0f2f55;border-radius:50%;"></div>
<div class="a" style="left:1965.5px;top:71.5px;width:3px;height:3px;background:#0f2f55;border-radius:50%;"></div>
<div class="a" style="left:1965.5px;top:76.5px;width:3px;height:3px;background:#0f2f55;border-radius:50%;"></div>
<div class="a" style="left:300.5px;top:109px;width:1682.5px;height:401px;background:#fff;border-radius:4px;box-shadow:0 0 1px rgba(0,0,0,.22),0 1px 1.5px rgba(0,0,0,.26),0 2px 4px rgba(0,0,0,.1);"></div>
<div class="a" style="left:300.5px;top:150px;width:1682.5px;height:7px;background:linear-gradient(180deg,rgba(0,0,0,.14),rgba(0,0,0,.06) 40%,rgba(0,0,0,0));"></div>
<svg class="a" style="left:311px;top:126px;" width="13" height="8" viewBox="0 0 13 8"><path d="M1 6.8L6.5 1.5 12 6.8" fill="none" stroke="#143f6c" stroke-width="1.7"/></svg>
<div class="t " style="left:332.00px;top:124.94px;font-size:11.9px;line-height:14.28px;color:#143f6c;font-weight:700;-webkit-text-stroke:0.12px #143f6c;letter-spacing:0.532px;">Alert Details (3)</div>
<svg class="a" style="left:440px;top:124px;" width="14" height="14" viewBox="0 0 14 14"><circle cx="7" cy="7" r="5.8" fill="none" stroke="#143f6c" stroke-width="1.2"/><path d="M5.3 5.6a1.75 1.75 0 1 1 2.4 1.6c-.5.2-.7.5-.7 1v.4" fill="none" stroke="#143f6c" stroke-width="1.15"/><circle cx="7" cy="10.2" r=".75" fill="#143f6c"/></svg>
<div class="t " style="left:335.50px;top:180.58px;font-size:10.8px;line-height:12.96px;color:#0f3a63;font-weight:700;-webkit-text-stroke:0.12px #0f3a63;letter-spacing:-0.285px;">Enabled</div>
<div class="t " style="left:426.00px;top:180.58px;font-size:10.8px;line-height:12.96px;color:#0f3a63;font-weight:700;-webkit-text-stroke:0.12px #0f3a63;">Alert Type</div>
<div class="t " style="left:582.50px;top:180.58px;font-size:10.8px;line-height:12.96px;color:#0f3a63;font-weight:700;-webkit-text-stroke:0.12px #0f3a63;letter-spacing:-0.155px;">Recipients</div>
<div class="t " style="left:745.60px;top:180.58px;font-size:10.8px;line-height:12.96px;color:#0f3a63;font-weight:700;-webkit-text-stroke:0.12px #0f3a63;letter-spacing:-0.186px;">Send Date(s)</div>
<div class="t " style="left:921.80px;top:180.58px;font-size:10.8px;line-height:12.96px;color:#0f3a63;font-weight:700;-webkit-text-stroke:0.12px #0f3a63;letter-spacing:0.100px;">Notification Details</div>
<div class="a" style="left:318px;top:202.1px;width:1648px;height:1.3px;background:#4f6d8d;"></div>
<div class="t " style="left:335.00px;top:240.18px;font-size:10.9px;line-height:13.08px;color:#1e1e1e;">Yes</div>
<div class="t " style="left:426.20px;top:233.18px;font-size:10.9px;line-height:13.08px;color:#1e1e1e;letter-spacing:-0.234px;">Clause Critical Dates -</div>
<div class="t " style="left:426.20px;top:246.88px;font-size:10.9px;line-height:13.08px;color:#1e1e1e;">Options</div>
<div class="t " style="left:582.50px;top:212.48px;font-size:10.9px;line-height:13.08px;color:#1e1e1e;letter-spacing:0.025px;">Harter, William</div>
<div class="t u" style="left:582.55px;top:226.08px;font-size:10.9px;line-height:13.08px;color:#2f6ca6;letter-spacing:-0.128px;">wharter@visuallease.com</div>
<div class="t " style="left:582.50px;top:253.88px;font-size:10.9px;line-height:13.08px;color:#1e1e1e;letter-spacing:-0.532px;">Lucas, Jason</div>
<div class="t u" style="left:582.77px;top:267.68px;font-size:10.9px;line-height:13.08px;color:#2f6ca6;letter-spacing:-0.254px;">jlucas@visuallease.com</div>
<div class="t " style="left:745.60px;top:226.08px;font-size:10.9px;line-height:13.08px;color:#1e1e1e;letter-spacing:-0.220px;">60 Days Before</div>
<div class="t " style="left:745.60px;top:239.98px;font-size:10.9px;line-height:13.08px;color:#1e1e1e;letter-spacing:-0.220px;">30 Days Before</div>
<div class="t " style="left:745.60px;top:253.58px;font-size:10.9px;line-height:13.08px;color:#1e1e1e;letter-spacing:-0.254px;">5 Days Before</div>
<div class="a" style="left:318px;top:291px;width:1648px;height:1px;background:#e2e2e2;"></div>
<div class="t " style="left:335.00px;top:349.18px;font-size:10.9px;line-height:13.08px;color:#1e1e1e;">Yes</div>
<div class="t " style="left:426.20px;top:349.18px;font-size:10.9px;line-height:13.08px;color:#1e1e1e;letter-spacing:-0.210px;">Custom</div>
<div class="t " style="left:582.50px;top:301.38px;font-size:10.9px;line-height:13.08px;color:#1e1e1e;letter-spacing:-0.532px;">Lucas, Jason</div>
<div class="t u" style="left:582.77px;top:315.08px;font-size:10.9px;line-height:13.08px;color:#2f6ca6;letter-spacing:-0.254px;">jlucas@visuallease.com</div>
<div class="t " style="left:582.50px;top:342.28px;font-size:10.9px;line-height:13.08px;color:#1e1e1e;">Green Thumb</div>
<div class="t " style="left:582.50px;top:355.98px;font-size:10.9px;line-height:13.08px;color:#1e1e1e;letter-spacing:-0.180px;">Landscaping</div>
<div class="t " style="left:582.50px;top:369.68px;font-size:10.9px;line-height:13.08px;color:#1e1e1e;letter-spacing:-0.094px;">1234 Main Street</div>
<div class="t " style="left:582.50px;top:383.38px;font-size:10.9px;line-height:13.08px;color:#1e1e1e;letter-spacing:-0.383px;">Anywhere NJ 07059 USA</div>
<div class="t u" style="left:582.50px;top:397.08px;font-size:10.9px;line-height:13.08px;color:#2f6ca6;letter-spacing:-0.224px;">GTLandscaping@mail.corp</div>
<div class="t " style="left:745.60px;top:342.08px;font-size:10.9px;line-height:13.08px;color:#1e1e1e;">09/30/2021 recurring every</div>
<div class="t " style="left:745.60px;top:355.98px;font-size:10.9px;line-height:13.08px;color:#1e1e1e;">year</div>
<div class="t " style="left:921.70px;top:341.88px;font-size:10.9px;line-height:13.08px;color:#1e1e1e;">This email is to remind you that our service contract is coming up for renewal.  We would like to have your renewal proposal sent to us 30 days prior to the expiration date of 11/30/2020.  Thank you for</div>
<div class="t " style="left:921.70px;top:356.18px;font-size:10.9px;line-height:13.08px;color:#1e1e1e;letter-spacing:0.012px;">your time.  We look forward to hearing from you soon.</div>
<div class="a" style="left:318px;top:420px;width:1648px;height:1px;background:#e2e2e2;"></div>
<div class="t " style="left:335.00px;top:437.28px;font-size:10.9px;line-height:13.08px;color:#1e1e1e;">Yes</div>
<div class="t " style="left:426.20px;top:437.28px;font-size:10.9px;line-height:13.08px;color:#1e1e1e;letter-spacing:-0.210px;">Custom</div>
<div class="t " style="left:582.50px;top:430.68px;font-size:10.9px;line-height:13.08px;color:#1e1e1e;letter-spacing:-0.532px;">Lucas, Jason</div>
<div class="t u" style="left:582.77px;top:444.38px;font-size:10.9px;line-height:13.08px;color:#2f6ca6;letter-spacing:-0.254px;">jlucas@visuallease.com</div>
<div class="t " style="left:745.60px;top:430.68px;font-size:10.9px;line-height:13.08px;color:#1e1e1e;">03/01/2023 recurring every</div>
<div class="t " style="left:745.60px;top:444.38px;font-size:10.9px;line-height:13.08px;color:#1e1e1e;">month</div>
<div class="t " style="left:921.70px;top:437.28px;font-size:10.9px;line-height:13.08px;color:#1e1e1e;">Tenant Improvement Allowance receipts due</div>
<div class="a" style="left:318px;top:467.5px;width:1648px;height:1px;background:#e2e2e2;"></div>
<svg class="a" style="left:1888px;top:480.3px;" width="9" height="9" viewBox="0 0 9 9"><path d="M4.5 0.5v4.8 M2.6 3.6L4.5 5.5 6.4 3.6 M0.8 5.4v1.4a.9.9 0 0 0 .9.9h5.6a.9.9 0 0 0 .9-.9V5.4" fill="none" stroke="#4d6e98" stroke-width="1"/></svg>
<div class="t " style="left:1913.00px;top:477.98px;font-size:10.9px;line-height:13.08px;color:#4d6e98;letter-spacing:-0.120px;">Export</div>
<div class="a" style="left:300.5px;top:527.5px;width:1682.5px;height:574.5px;background:#fff;border-radius:4px;box-shadow:0 0 1px rgba(0,0,0,.22),0 1px 1.5px rgba(0,0,0,.26),0 2px 4px rgba(0,0,0,.1);"></div>
<div class="a" style="left:300.5px;top:568.5px;width:1682.5px;height:7px;background:linear-gradient(180deg,rgba(0,0,0,.14),rgba(0,0,0,.06) 40%,rgba(0,0,0,0));"></div>
<svg class="a" style="left:311px;top:544px;" width="13" height="8" viewBox="0 0 13 8"><path d="M1 6.8L6.5 1.5 12 6.8" fill="none" stroke="#143f6c" stroke-width="1.7"/></svg>
<div class="t " style="left:331.70px;top:543.34px;font-size:11.9px;line-height:14.28px;color:#143f6c;font-weight:700;-webkit-text-stroke:0.12px #143f6c;letter-spacing:0.626px;">Upcoming Alerts (7)</div>
<svg class="a" style="left:467px;top:542px;" width="14" height="14" viewBox="0 0 14 14"><circle cx="7" cy="7" r="5.8" fill="none" stroke="#143f6c" stroke-width="1.2"/><path d="M5.3 5.6a1.75 1.75 0 1 1 2.4 1.6c-.5.2-.7.5-.7 1v.4" fill="none" stroke="#143f6c" stroke-width="1.15"/><circle cx="7" cy="10.2" r=".75" fill="#143f6c"/></svg>
<div class="t " style="left:348.50px;top:598.38px;font-size:10.8px;line-height:12.96px;color:#0f3a63;font-weight:700;-webkit-text-stroke:0.12px #0f3a63;letter-spacing:0.127px;">Notification</div>
<div class="t " style="left:367.20px;top:611.58px;font-size:10.8px;line-height:12.96px;color:#0f3a63;font-weight:700;-webkit-text-stroke:0.12px #0f3a63;">Date</div>
<div class="t " style="left:472.80px;top:605.38px;font-size:10.8px;line-height:12.96px;color:#0f3a63;font-weight:700;-webkit-text-stroke:0.12px #0f3a63;">Alert For</div>
<div class="t " style="left:600.60px;top:605.38px;font-size:10.8px;line-height:12.96px;color:#0f3a63;font-weight:700;-webkit-text-stroke:0.12px #0f3a63;letter-spacing:-0.155px;">Recipients</div>
<div class="t " style="left:764.60px;top:605.38px;font-size:10.8px;line-height:12.96px;color:#0f3a63;font-weight:700;-webkit-text-stroke:0.12px #0f3a63;letter-spacing:0.100px;">Notification Details</div>
<div class="a" style="left:318px;top:634.1px;width:1648px;height:1.3px;background:#4f6d8d;"></div>
<div class="t " style="left:335.30px;top:651.28px;font-size:10.9px;line-height:13.08px;color:#1e1e1e;letter-spacing:-0.017px;">07/01/2023</div>
<div class="t " style="left:472.90px;top:644.58px;font-size:10.9px;line-height:13.08px;color:#1e1e1e;letter-spacing:-0.210px;">Custom</div>
<div class="t " style="left:472.90px;top:658.38px;font-size:10.9px;line-height:13.08px;color:#1e1e1e;letter-spacing:0.100px;">Notification</div>
<div class="t " style="left:600.60px;top:644.58px;font-size:10.9px;line-height:13.08px;color:#1e1e1e;letter-spacing:-0.532px;">Lucas, Jason</div>
<div class="t u" style="left:600.87px;top:658.38px;font-size:10.9px;line-height:13.08px;color:#2f6ca6;letter-spacing:-0.254px;">jlucas@visuallease.com</div>
<div class="t " style="left:764.60px;top:651.28px;font-size:10.9px;line-height:13.08px;color:#1e1e1e;">Tenant Improvement Allowance receipts due</div>
<div class="t " style="left:335.30px;top:697.78px;font-size:10.9px;line-height:13.08px;color:#1e1e1e;letter-spacing:-0.017px;">08/01/2023</div>
<div class="t " style="left:472.90px;top:691.08px;font-size:10.9px;line-height:13.08px;color:#1e1e1e;letter-spacing:-0.210px;">Custom</div>
<div class="t " style="left:472.90px;top:704.88px;font-size:10.9px;line-height:13.08px;color:#1e1e1e;letter-spacing:0.100px;">Notification</div>
<div class="t " style="left:600.60px;top:691.08px;font-size:10.9px;line-height:13.08px;color:#1e1e1e;letter-spacing:-0.532px;">Lucas, Jason</div>
<div class="t u" style="left:600.87px;top:704.88px;font-size:10.9px;line-height:13.08px;color:#2f6ca6;letter-spacing:-0.254px;">jlucas@visuallease.com</div>
<div class="t " style="left:764.60px;top:697.78px;font-size:10.9px;line-height:13.08px;color:#1e1e1e;">Tenant Improvement Allowance receipts due</div>
<div class="t " style="left:335.30px;top:745.58px;font-size:10.9px;line-height:13.08px;color:#1e1e1e;letter-spacing:-0.017px;">09/01/2023</div>
<div class="t " style="left:472.90px;top:738.88px;font-size:10.9px;line-height:13.08px;color:#1e1e1e;letter-spacing:-0.210px;">Custom</div>
<div class="t " style="left:472.90px;top:752.68px;font-size:10.9px;line-height:13.08px;color:#1e1e1e;letter-spacing:0.100px;">Notification</div>
<div class="t " style="left:600.60px;top:738.88px;font-size:10.9px;line-height:13.08px;color:#1e1e1e;letter-spacing:-0.532px;">Lucas, Jason</div>
<div class="t u" style="left:600.87px;top:752.68px;font-size:10.9px;line-height:13.08px;color:#2f6ca6;letter-spacing:-0.254px;">jlucas@visuallease.com</div>
<div class="t " style="left:764.60px;top:745.58px;font-size:10.9px;line-height:13.08px;color:#1e1e1e;">Tenant Improvement Allowance receipts due</div>
<div class="a" style="left:318px;top:681px;width:1648px;height:1px;background:#e2e2e2;"></div>
<div class="a" style="left:318px;top:728.8px;width:1648px;height:1px;background:#e2e2e2;"></div>
<div class="a" style="left:318px;top:775.8px;width:1648px;height:1px;background:#e2e2e2;"></div>
<div class="a" style="left:318px;top:905.2px;width:1648px;height:1px;background:#e2e2e2;"></div>
<div class="a" style="left:318px;top:952.2px;width:1648px;height:1px;background:#e2e2e2;"></div>
<div class="t " style="left:335.30px;top:834.18px;font-size:10.9px;line-height:13.08px;color:#1e1e1e;letter-spacing:-0.017px;">09/30/2023</div>
<div class="t " style="left:472.90px;top:827.28px;font-size:10.9px;line-height:13.08px;color:#1e1e1e;letter-spacing:-0.210px;">Custom</div>
<div class="t " style="left:472.90px;top:841.18px;font-size:10.9px;line-height:13.08px;color:#1e1e1e;letter-spacing:0.100px;">Notification</div>
<div class="t " style="left:600.60px;top:785.88px;font-size:10.9px;line-height:13.08px;color:#1e1e1e;letter-spacing:-0.532px;">Lucas, Jason</div>
<div class="t u" style="left:600.87px;top:799.88px;font-size:10.9px;line-height:13.08px;color:#2f6ca6;letter-spacing:-0.254px;">jlucas@visuallease.com</div>
<div class="t " style="left:600.60px;top:827.28px;font-size:10.9px;line-height:13.08px;color:#1e1e1e;">Green Thumb</div>
<div class="t " style="left:600.60px;top:841.18px;font-size:10.9px;line-height:13.08px;color:#1e1e1e;letter-spacing:-0.180px;">Landscaping</div>
<div class="t " style="left:600.60px;top:854.88px;font-size:10.9px;line-height:13.08px;color:#1e1e1e;letter-spacing:-0.094px;">1234 Main Street</div>
<div class="t " style="left:600.60px;top:868.68px;font-size:10.9px;line-height:13.08px;color:#1e1e1e;letter-spacing:-0.383px;">Anywhere NJ 07059 USA</div>
<div class="t u" style="left:600.60px;top:882.28px;font-size:10.9px;line-height:13.08px;color:#2f6ca6;letter-spacing:-0.224px;">GTLandscaping@mail.corp</div>
<div class="t " style="left:764.60px;top:827.28px;font-size:10.9px;line-height:13.08px;color:#1e1e1e;">This email is to remind you that our service contract is coming up for renewal.  We would like to have your renewal proposal sent to us 30 days prior to the expiration date of 11/30/2020.  Thank you for your time.  We look forward to hearing</div>
<div class="t " style="left:764.60px;top:841.18px;font-size:10.9px;line-height:13.08px;color:#1e1e1e;">from you soon.</div>
<div class="t " style="left:335.30px;top:922.38px;font-size:10.9px;line-height:13.08px;color:#1e1e1e;letter-spacing:-0.017px;">10/01/2023</div>
<div class="t " style="left:472.90px;top:915.68px;font-size:10.9px;line-height:13.08px;color:#1e1e1e;letter-spacing:-0.210px;">Custom</div>
<div class="t " style="left:472.90px;top:929.48px;font-size:10.9px;line-height:13.08px;color:#1e1e1e;letter-spacing:0.100px;">Notification</div>
<div class="t " style="left:600.60px;top:915.88px;font-size:10.9px;line-height:13.08px;color:#1e1e1e;letter-spacing:-0.532px;">Lucas, Jason</div>
<div class="t u" style="left:600.87px;top:929.48px;font-size:10.9px;line-height:13.08px;color:#2f6ca6;letter-spacing:-0.254px;">jlucas@visuallease.com</div>
<div class="t " style="left:764.60px;top:922.68px;font-size:10.9px;line-height:13.08px;color:#1e1e1e;">Tenant Improvement Allowance receipts due</div>
<div class="t " style="left:1594.40px;top:970.08px;font-size:10.9px;line-height:13.08px;color:#6b6b6b;letter-spacing:-0.125px;">Items per page:</div>
<div class="a" style="left:1675.8px;top:962.4px;width:56.8px;height:28.2px;box-sizing:border-box;border:1.1px solid #9a9a9a;border-radius:5px;background:#fff;"></div>
<div class="t " style="left:1683.60px;top:969.90px;font-size:11.3px;line-height:13.56px;color:#222;">5</div>
<svg class="a" style="left:1709px;top:972px;" width="14" height="10" viewBox="0 0 14 10"><path d="M2.2 2.8l4.8 4.8 4.8-4.8" fill="none" stroke="#3a3a3a" stroke-width="1.4"/></svg>
<div class="t " style="left:1764.00px;top:970.68px;font-size:10.9px;line-height:13.08px;color:#6b6b6b;letter-spacing:-0.339px;">1 – 5 of 7</div>
<svg class="a" style="left:1843px;top:970px;" width="18" height="16" viewBox="0 0 18 16"><path d="M3 2.5v11 M14 2.5L8.5 8 14 13.5" fill="none" stroke="#7a7a7a" stroke-width="1.6"/></svg>
<svg class="a" style="left:1878px;top:970px;" width="14" height="16" viewBox="0 0 14 16"><path d="M10.5 2.5L5 8l5.5 5.5" fill="none" stroke="#7a7a7a" stroke-width="1.6"/></svg>
<svg class="a" style="left:1913px;top:970px;" width="14" height="16" viewBox="0 0 14 16"><path d="M3.5 2.5L9 8l-5.5 5.5" fill="none" stroke="#1e69b8" stroke-width="1.6"/></svg>
<svg class="a" style="left:1946px;top:970px;" width="18" height="16" viewBox="0 0 18 16"><path d="M3 2.5L8.5 8 3 13.5 M14 2.5v11" fill="none" stroke="#1e69b8" stroke-width="1.6"/></svg>
<svg class="a" style="left:1888px;top:1014px;" width="9" height="9" viewBox="0 0 9 9"><path d="M4.5 0.5v4.8 M2.6 3.6L4.5 5.5 6.4 3.6 M0.8 5.4v1.4a.9.9 0 0 0 .9.9h5.6a.9.9 0 0 0 .9-.9V5.4" fill="none" stroke="#4d6e98" stroke-width="1"/></svg>
<div class="t " style="left:1913.00px;top:1011.68px;font-size:10.9px;line-height:13.08px;color:#4d6e98;letter-spacing:-0.120px;">Export</div>
<div class="t " style="left:1681.10px;top:1050.82px;font-size:13.4px;line-height:16.08px;color:#123d6a;font-weight:700;-webkit-text-stroke:0.12px #123d6a;letter-spacing:-0.451px;">View Alerts to send in next:</div>
<div class="a" style="left:1847.3px;top:1043.2px;width:59.4px;height:29.9px;box-sizing:border-box;border:1.2px solid #6e6e6e;border-radius:5px;background:#fff;"></div>
<div class="t " style="left:1858.80px;top:1051.15px;font-size:12.2px;line-height:14.64px;color:#222;">180</div>
<div class="t " style="left:1910.50px;top:1050.82px;font-size:13.4px;line-height:16.08px;color:#123d6a;font-weight:700;-webkit-text-stroke:0.12px #123d6a;letter-spacing:0.267px;">day(s)</div>
<div class="a" style="left:300.5px;top:1118.5px;width:1682.5px;height:20px;background:#fff;border-radius:4px;box-shadow:0 0 1px rgba(0,0,0,.22),0 1px 1.5px rgba(0,0,0,.26),0 2px 4px rgba(0,0,0,.1);"></div>
</div></body></html>
